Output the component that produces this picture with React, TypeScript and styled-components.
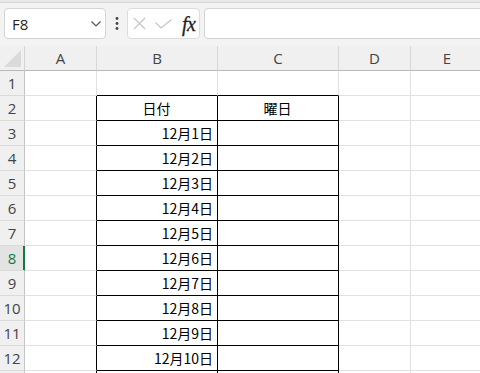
import React from 'react';
import styled, { createGlobalStyle } from 'styled-components';

const GlobalStyle = createGlobalStyle`
  html, body {
    margin: 0;
    padding: 0;
    background: #fff;
  }
  body {
    overflow: hidden;
  }
`;

const Window = styled.div`
  width: 480px;
  height: 373px;
  overflow: hidden;
  background: #f3f3f3;
  font-family: 'Open Sans', 'Noto Sans', sans-serif;
`;

const RibbonEdge = styled.div`
  height: 2px;
  background: #e8e8e8;
  border-bottom: 1px solid #d6d6d6;
`;

const FormulaRow = styled.div`
  display: flex;
  height: 31px;
  padding: 5px 0 7px 4px;
`;

const NameBox = styled.div`
  box-sizing: border-box;
  width: 102px;
  display: flex;
  align-items: center;
  justify-content: space-between;
  padding: 0 4px 0 7px;
  background: #fff;
  border: 1px solid #d4d4d4;
  border-radius: 4px;
  font-size: 15px;
  color: #242424;
`;

const DotsSlot = styled.div`
  width: 21px;
  display: flex;
  align-items: center;
  justify-content: center;
`;

const FxBox = styled.div`
  box-sizing: border-box;
  width: 73px;
  display: flex;
  align-items: center;
  gap: 9px;
  padding-left: 5px;
  background: #fff;
  border: 1px solid #dcdcdc;
  border-radius: 4px;
`;

const FxLabel = styled.span`
  font-family: 'Liberation Serif', 'DejaVu Serif', serif;
  font-style: italic;
  font-size: 20px;
  line-height: 1;
  color: #222;
  -webkit-text-stroke: 0.3px #222;
  letter-spacing: -0.5px;
  margin-left: 1px;
`;

const FormulaInput = styled.div`
  flex: 1;
  margin-left: 4px;
  margin-right: -6px;
  background: #fff;
  border: 1px solid #d4d4d4;
  border-radius: 4px;
`;

const Sheet = styled.div`
  display: grid;
  grid-template-columns: 25px 72px 121px 121px 72px 73px;
  grid-auto-rows: 25px;
  background: #fff;
`;

const Corner = styled.div`
  box-sizing: border-box;
  background: #f0f0f0;
  border-right: 1px solid #d4d4d4;
  border-bottom: 1px solid #b9b9b9;
  display: flex;
  align-items: flex-end;
  justify-content: flex-end;
  padding: 0 3px 3px 0;
`;

const ColHeader = styled.div`
  box-sizing: border-box;
  background: #f0f0f0;
  border-right: 1px solid #d8d8d8;
  border-bottom: 1px solid #b9b9b9;
  display: flex;
  align-items: center;
  justify-content: center;
  font-size: 15px;
  color: #444;
`;

const RowHeader = styled.div<{ $active?: boolean }>`
  box-sizing: border-box;
  background: ${(p) => (p.$active ? '#e3e3e3' : '#f0f0f0')};
  border-right: 1px solid ${(p) => (p.$active ? '#107c41' : '#c4c4c4')};
  box-shadow: ${(p) => (p.$active ? 'inset -1px 0 0 #107c41' : 'none')};
  border-bottom: 1px solid #dadada;
  display: flex;
  align-items: center;
  justify-content: center;
  font-size: 15px;
  color: ${(p) => (p.$active ? '#107c41' : '#444')};
`;

const Cell = styled.div<{ $right: string; $bottom: string; $align?: 'center' | 'right' }>`
  box-sizing: border-box;
  border-right: 1px solid ${(p) => p.$right};
  border-bottom: 1px solid ${(p) => p.$bottom};
  display: flex;
  align-items: center;
  justify-content: ${(p) => (p.$align === 'right' ? 'flex-end' : 'center')};
  padding: 0 4px 0 3px;
  font-family: 'Noto Sans CJK JP', 'Noto Sans', sans-serif;
  font-size: 14px;
  color: #000;
  white-space: nowrap;
`;

const GRID = '#e1e1e1';
const INK = '#000';
const columns = ['A', 'B', 'C', 'D', 'E'];
const rowCount = 12;

const cellValue = (row: number, col: number): string => {
  if (row > rowCount) return '';
  if (row === 2 && col === 1) return '日付';
  if (row === 2 && col === 2) return '曜日';
  if (row >= 3 && col === 1) return `12月${row - 2}日`;
  return '';
};

const inTable = (row: number, col: number) => row >= 2 && (col === 1 || col === 2);

const Chevron = () => (
  <svg width="10" height="6" viewBox="0 0 10 6">
    <path d="M0.5 0.5 L5 5 L9.5 0.5" fill="none" stroke="#555" strokeWidth="1.2" />
  </svg>
);

const Dots = () => (
  <svg width="4" height="13" viewBox="0 0 4 13">
    <circle cx="2" cy="1.5" r="1.4" fill="#444" />
    <circle cx="2" cy="6.5" r="1.4" fill="#444" />
    <circle cx="2" cy="11.5" r="1.4" fill="#444" />
  </svg>
);

const Cross = () => (
  <svg width="13" height="13" viewBox="0 0 13 13">
    <path d="M1 1 L12 12 M12 1 L1 12" stroke="#c4c4c4" strokeWidth="1.1" fill="none" />
  </svg>
);

const Check = () => (
  <svg width="17" height="10" viewBox="0 0 17 10">
    <path d="M0.5 3.5 L6 9 L16.5 0.5" stroke="#c4c4c4" strokeWidth="1.1" fill="none" />
  </svg>
);

const CornerMark = () => (
  <svg width="17" height="17" viewBox="0 0 17 17">
    <polygon points="17,0 17,17 0,17" fill="#dadada" />
  </svg>
);

const App: React.FC = () => {
  // one extra row so the table's lines run on past the bottom edge
  const rows = Array.from({ length: rowCount + 1 }, (_, i) => i + 1);

  return (
    <Window>
      <GlobalStyle />
      <RibbonEdge />
      <FormulaRow>
        <NameBox>
          <span>F8</span>
          <Chevron />
        </NameBox>
        <DotsSlot>
          <Dots />
        </DotsSlot>
        <FxBox>
          <Cross />
          <Check />
          <FxLabel>fx</FxLabel>
        </FxBox>
        <FormulaInput />
      </FormulaRow>
      <Sheet>
        <Corner>
          <CornerMark />
        </Corner>
        {columns.map((c) => (
          <ColHeader key={c}>{c}</ColHeader>
        ))}
        {rows.map((row) => (
          <React.Fragment key={row}>
            <RowHeader $active={row === 8}>{row <= rowCount ? row : ''}</RowHeader>
            {columns.map((c, col) => {
              const right = inTable(row, col) || (col === 0 && row >= 2) ? INK : GRID;
              const bottom = inTable(row, col) || (row === 1 && (col === 1 || col === 2)) ? INK : GRID;
              return (
                <Cell key={c} $right={right} $bottom={bottom} $align={row >= 3 ? 'right' : 'center'}>
                  {cellValue(row, col)}
                </Cell>
              );
            })}
          </React.Fragment>
        ))}
      </Sheet>
    </Window>
  );
};

export default App;
